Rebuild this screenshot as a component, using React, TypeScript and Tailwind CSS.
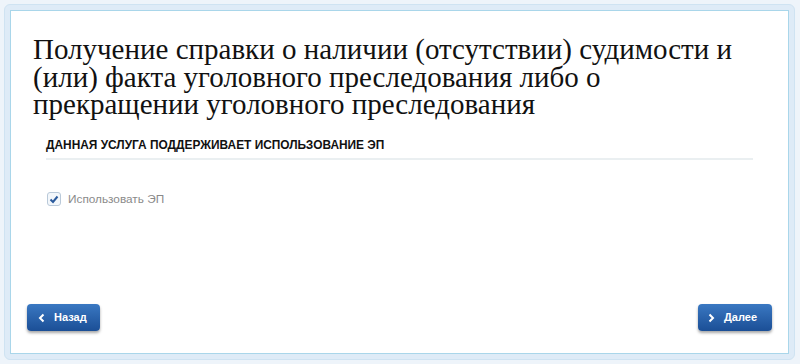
import React from 'react';

const ChevronLeft = () => (
  <svg width="7" height="10" viewBox="0 0 7 10" className="block">
    <path d="M5.5 1.5 L2 5 L5.5 8.5" stroke="white" strokeWidth="2" fill="none" />
  </svg>
);

const ChevronRight = () => (
  <svg width="7" height="10" viewBox="0 0 7 10" className="block">
    <path d="M1.5 1.5 L5 5 L1.5 8.5" stroke="white" strokeWidth="2" fill="none" />
  </svg>
);

const App: React.FC = () => {
  return (
    <div className="w-[800px] h-[364px] bg-[#eef4fa] pt-[4px] pl-[4px] pr-[5px] pb-[4px] overflow-hidden">
      <div className="h-[356px] rounded-[6px] border border-[#cfe3f2] bg-[#deebf7] p-[5px]">
        <div className="h-[344px] bg-white border border-[#a9d6ea] flex flex-col">
          <h1 className="pl-[22px] pr-[30px] pt-[25px] font-['Liberation_Serif',serif] text-[29px] leading-[27.5px] text-[#111]">
            Получение справки о наличии (отсутствии) судимости и (или) факта уголовного преследования либо о прекращении уголовного преследования
          </h1>
          <div className="mx-[35px] mt-[19px] pb-[6px] border-b-2 border-[#eaeff1]">
            <p className="font-['Liberation_Sans',sans-serif] text-[11.9px] leading-[14px] font-bold text-[#111]">
              ДАННАЯ УСЛУГА ПОДДЕРЖИВАЕТ ИСПОЛЬЗОВАНИЕ ЭП
            </p>
          </div>
          <div className="mx-[36px] mt-[31px] flex items-center gap-[7px]">
            <div className="w-[14px] h-[14px] rounded-[3px] border border-[#b9c9d9] bg-[#f3f7fb] flex items-center justify-center">
              <svg width="10" height="9" viewBox="0 0 10 9">
                <path d="M1.5 4.5 L4 7 L8.5 1.5" stroke="#2a5a9c" strokeWidth="2" fill="none" />
              </svg>
            </div>
            <span className="font-['Liberation_Sans',sans-serif] text-[11.8px] text-[#8a8a8a]">
              Использовать ЭП
            </span>
          </div>
          <div className="mt-auto mb-[22px] mx-[16px] flex justify-between">
            <button className="w-[73px] h-[27px] rounded-[4px] bg-gradient-to-b from-[#3a78c2] to-[#1b4f96] shadow-[0_2px_3px_rgba(0,0,0,0.35)] flex items-center pl-[11px] gap-[9px] text-white font-['Liberation_Sans',sans-serif] text-[11px] font-bold">
              <ChevronLeft />
              Назад
            </button>
            <button className="w-[74px] h-[27px] rounded-[4px] bg-gradient-to-b from-[#3a78c2] to-[#1b4f96] shadow-[0_2px_3px_rgba(0,0,0,0.35)] flex items-center pl-[10px] gap-[9px] text-white font-['Liberation_Sans',sans-serif] text-[11px] font-bold">
              <ChevronRight />
              Далее
            </button>
          </div>
        </div>
      </div>
    </div>
  );
};

export default App;
